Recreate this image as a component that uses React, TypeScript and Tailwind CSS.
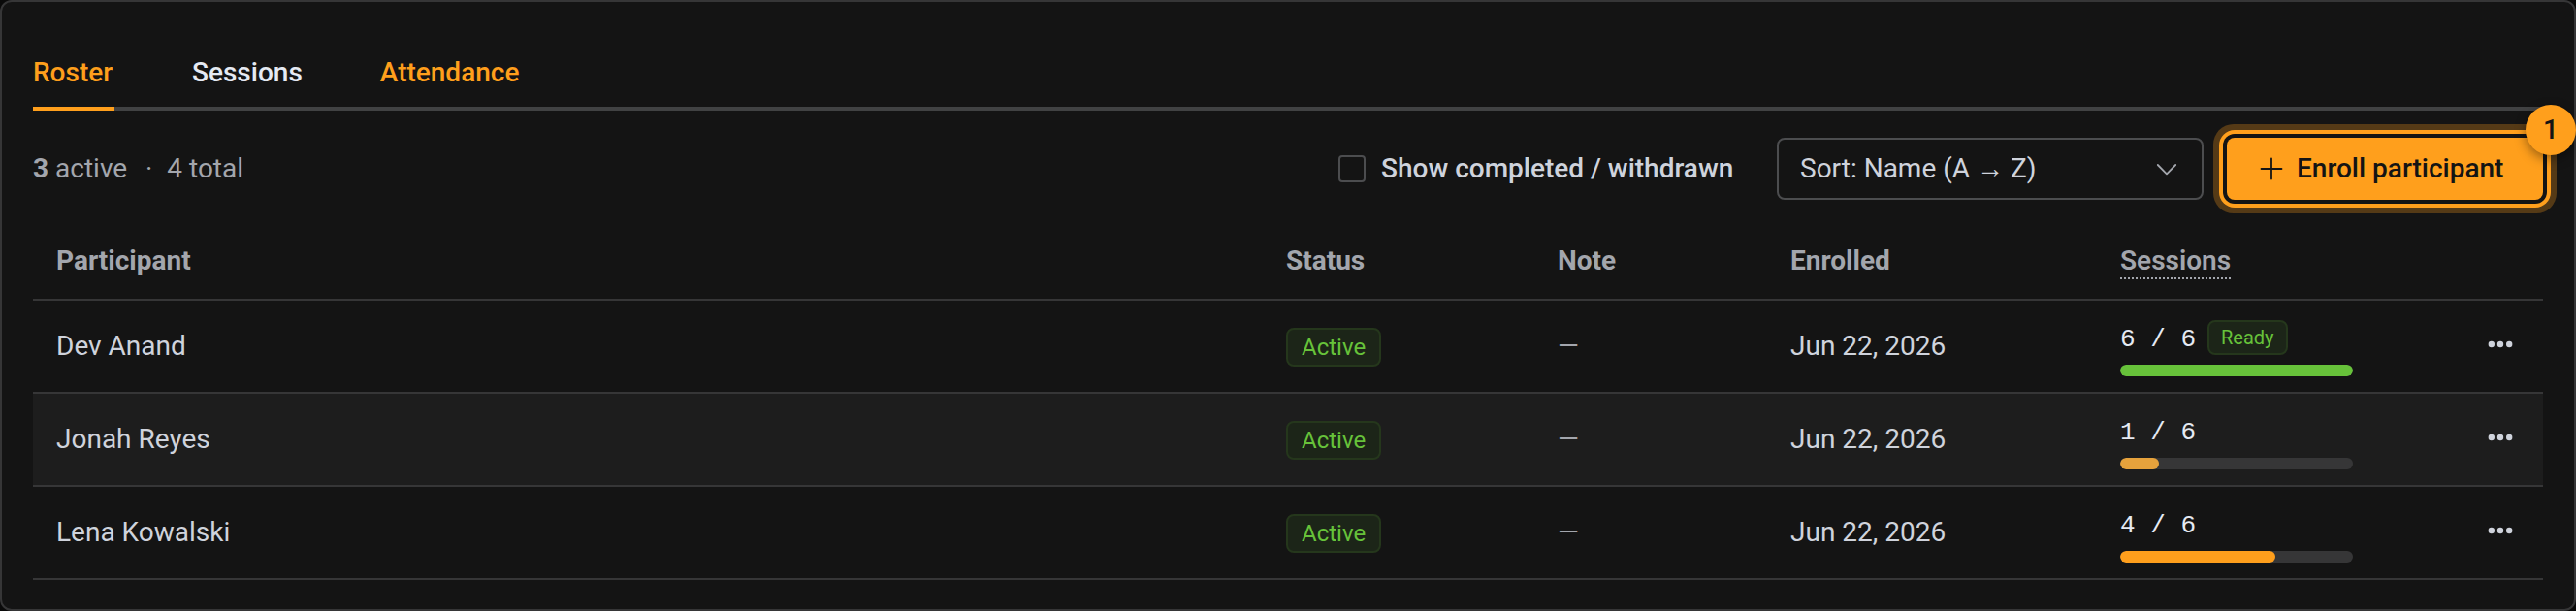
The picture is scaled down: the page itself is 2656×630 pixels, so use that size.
import { useState } from "react";

type Participant = {
  name: string;
  status: string;
  enrolled: string;
  done: number;
  total: number;
  bar: string;
};

const participants: Participant[] = [
  { name: "Dev Anand", status: "Active", enrolled: "Jun 22, 2026", done: 6, total: 6, bar: "bg-[#67c23a]" },
  { name: "Jonah Reyes", status: "Active", enrolled: "Jun 22, 2026", done: 1, total: 6, bar: "bg-[#e6a23c]" },
  { name: "Lena Kowalski", status: "Active", enrolled: "Jun 22, 2026", done: 4, total: 6, bar: "bg-[#ff9f1c]" },
];

function Tabs() {
  const tab = "flex h-20 items-center border-b-4 pt-1.5 font-medium";
  return (
    <nav className="flex gap-20 shadow-[inset_0_-4px_0_#414243]">
      <a href="#roster" aria-current="page" className={`${tab} min-w-[84px] border-[#ff9f1c] text-[#ff9f1c]`}>
        Roster
      </a>
      <a href="#sessions" className={`${tab} border-transparent text-[#e5eaf3]`}>
        Sessions
      </a>
      <a href="#attendance" className={`${tab} border-transparent text-[#ff9f1c]`}>
        Attendance
      </a>
    </nav>
  );
}

function Toolbar() {
  const [showAll, setShowAll] = useState(false);
  return (
    <div className="mt-7 flex items-center">
      <p className="flex-1 text-[#a3a6ad]">
        <strong className="font-bold">3</strong> active <span className="mr-2 ml-3">·</span> 4 total
      </p>
      <label className="mr-8 flex min-w-[420px] items-center gap-4 font-medium text-[#cfd3dc]">
        <input
          type="checkbox"
          checked={showAll}
          onChange={(e) => setShowAll(e.target.checked)}
          className="size-7 appearance-none rounded-sm border-2 border-[#4c4d4f] checked:bg-[#ff9f1c]"
        />
        Show completed / withdrawn
      </label>
      <div className="relative mr-6">
        <select
          aria-label="Sort participants"
          className="h-16 w-[440px] appearance-none rounded-lg border-2 border-[#4c4d4f] bg-transparent px-[22px] text-[#cfd3dc]"
        >
          <option>Sort: Name (A → Z)</option>
        </select>
        <svg
          viewBox="0 0 28 28"
          className="pointer-events-none absolute top-[18px] right-6 size-7"
          fill="none"
          stroke="#a3a6ad"
          strokeWidth="1.8"
          strokeLinecap="round"
          strokeLinejoin="round"
        >
          <path d="M4.8 10 L14 19.4 L23.2 10" />
        </svg>
      </div>
      <div className="relative">
        <button
          type="button"
          className="flex h-16 min-w-[326px] items-center gap-3 rounded-lg bg-[#ff9f1c] px-8 font-medium text-[#141414] shadow-[0_0_0_4px_#141414,0_0_0_8px_#ff9f1c,0_0_0_14px_rgba(255,159,28,0.28)]"
        >
          <svg viewBox="0 0 28 28" className="size-7" fill="none" stroke="currentColor" strokeWidth="1.8" strokeLinecap="round">
            <path d="M14 3.5 V24.5 M3.5 14 H24.5" />
          </svg>
          Enroll participant
        </button>
        <span className="absolute -top-[34px] -right-[34px] flex size-[52px] items-center justify-center rounded-full bg-[#ff9f1c] font-medium text-[#141414] shadow-[0_4px_12px_rgba(0,0,0,0.4)]">
          1
        </span>
      </div>
    </div>
  );
}

const cell = "border-b-2 border-[#363637]";

function Row({ person }: { person: Participant }) {
  const tag = "inline-flex items-center rounded-lg border-2 border-[#25371c] bg-[#1c2518] text-[#67c23a]";
  return (
    <tr className="h-24 even:bg-[#1d1d1d]">
      <td className={`${cell} px-6`}>{person.name}</td>
      <td className={`${cell} px-6`}>
        <div className="flex pt-0.5">
          <span className={`${tag} h-10 px-[14px] text-2xl`}>{person.status}</span>
        </div>
      </td>
      <td className={`${cell} px-6 text-[#a3a6ad]`}>—</td>
      <td className={`${cell} px-6`}>{person.enrolled}</td>
      <td className={`${cell} px-6 pt-1`}>
        <div className="flex h-9 items-center gap-3">
          <span className="pt-1 font-['Liberation_Mono',monospace] text-[26px] text-[#e5eaf3]">
            {person.done} / {person.total}
          </span>
          {person.done === person.total && <span className={`${tag} h-9 px-3 text-xl`}>Ready</span>}
        </div>
        <div className="mt-[10px] h-3 w-60 overflow-hidden rounded-full bg-[#363637]">
          <div
            className={`h-full rounded-full ${person.bar}`}
            style={{ width: `${(person.done / person.total) * 100}%` }}
          />
        </div>
      </td>
      <td className={`${cell} pr-[30px] pb-2 text-right`}>
        <button type="button" aria-label={`Actions for ${person.name}`} className="align-middle">
          <svg viewBox="0 0 28 28" className="size-7" fill="#cfd3dc">
            <circle cx="4.8" cy="14" r="3.2" />
            <circle cx="14" cy="14" r="3.2" />
            <circle cx="23.2" cy="14" r="3.2" />
          </svg>
        </button>
      </td>
    </tr>
  );
}

export default function App() {
  return (
    <div className="bg-[#0a0a0a] font-[Roboto,'Noto_Sans',sans-serif] text-[28px] leading-[46px]">
      <main className="rounded-xl border-2 border-[#363637] bg-[#141414] px-8 pt-8 pb-[30px]">
        <Tabs />
        <Toolbar />
        <table className="mt-6 w-full table-fixed border-separate border-spacing-0 text-left text-[#cfd3dc]">
          <thead>
            <tr className="h-20 text-[#a3a6ad]">
              <th className={`${cell} px-6 font-bold`}>Participant</th>
              <th className={`${cell} w-[280px] px-6 font-bold`}>Status</th>
              <th className={`${cell} w-60 px-6 font-bold`}>Note</th>
              <th className={`${cell} w-[340px] px-6 font-bold`}>Enrolled</th>
              <th className={`${cell} w-[340px] px-6 font-semibold`}>
                <span className="border-b-2 border-dotted border-[#a3a6ad] pb-px">Sessions</span>
              </th>
              <th className={`${cell} w-[120px]`} aria-label="Actions" />
            </tr>
          </thead>
          <tbody>
            {participants.map((p) => (
              <Row key={p.name} person={p} />
            ))}
          </tbody>
        </table>
      </main>
    </div>
  );
}
